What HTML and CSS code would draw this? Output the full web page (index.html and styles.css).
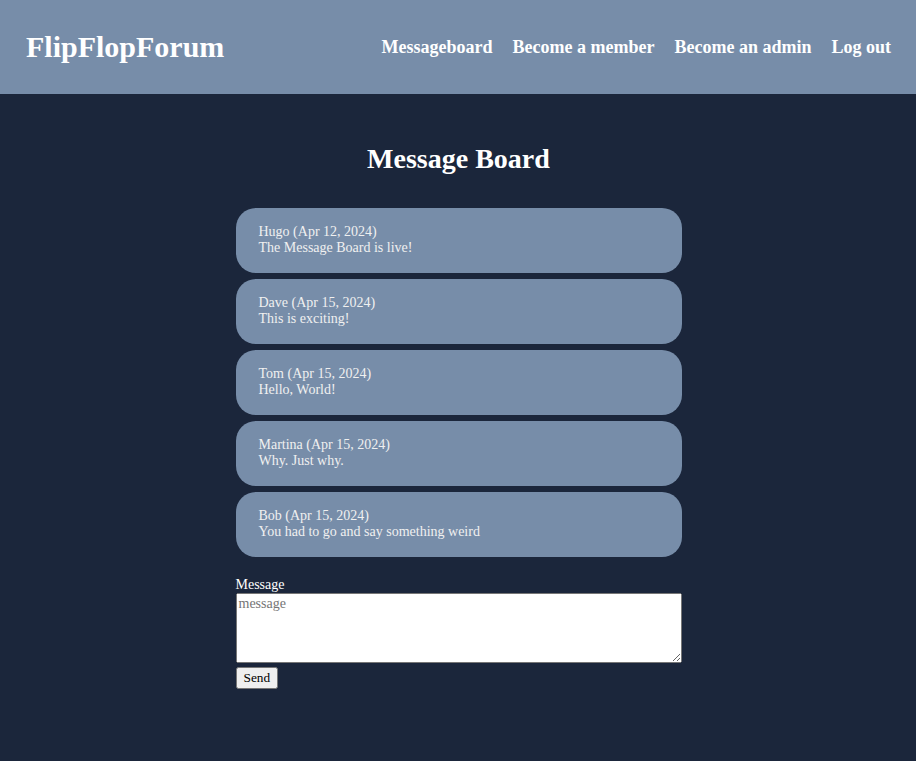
FILE: index.html
```html
<!DOCTYPE html>
<html>
<head>
<meta charset="utf-8">
<title>FlipFlopForum</title>
<link rel="stylesheet" href="styles.css">
</head>
<body>
<header class="site-header">
  <div class="logo">FlipFlopForum</div>
  <nav class="nav">
    <a href="#">Messageboard</a>
    <a href="#">Become a member</a>
    <a href="#">Become an admin</a>
    <a href="#">Log out</a>
  </nav>
</header>
<main class="board">
  <h1 class="board-title">Message Board</h1>
  <ul class="messages">
    <li class="message"><div>Hugo (Apr 12, 2024)</div><div>The Message Board is live!</div></li>
    <li class="message"><div>Dave (Apr 15, 2024)</div><div>This is exciting!</div></li>
    <li class="message"><div>Tom (Apr 15, 2024)</div><div>Hello, World!</div></li>
    <li class="message"><div>Martina (Apr 15, 2024)</div><div>Why. Just why.</div></li>
    <li class="message"><div>Bob (Apr 15, 2024)</div><div>You had to go and say something weird</div></li>
  </ul>
  <form class="post-form">
    <label for="msg">Message</label>
    <textarea id="msg" placeholder="message"></textarea>
    <button type="button">Send</button>
  </form>
</main>
</body>
</html>
```
FILE: styles.css
```css
html, body {
  margin: 0;
  padding: 0;
  background: #1b263b;
  color: #e0e1dd;
  font-family: "Liberation Serif", "Times New Roman", serif;
}
.site-header {
  background: #778da9;
  height: 94px;
  padding: 0 25px 0 26px;
  display: flex;
  align-items: center;
  justify-content: space-between;
}
.logo {
  font-size: 30px;
  font-weight: bold;
  color: #ffffff;
}
.nav {
  display: flex;
  gap: 20px;
}
.nav a {
  color: #ffffff;
  text-decoration: none;
  font-weight: bold;
  font-size: 18px;
}
.board {
  width: 446px;
  margin: 0 auto;
  padding-left: 1px;
}
.board-title {
  text-align: center;
  font-size: 28px;
  margin: 49px 0 33px;
  color: #ffffff;
}
.messages {
  list-style: none;
  margin: 0;
  padding: 0;
  display: flex;
  flex-direction: column;
  gap: 6px;
}
.message {
  background: #778da9;
  border-radius: 20px;
  padding: 16px 23px 17px;
  font-size: 14px;
  line-height: 16px;
  color: #f0f0f0;
}
.post-form {
  margin-top: 20px;
  display: flex;
  flex-direction: column;
  align-items: flex-start;
  font-size: 14px;
}
.post-form label {
  color: #ffffff;
}
.post-form textarea {
  box-sizing: border-box;
  width: 446px;
  height: 70px;
  font-family: "Liberation Serif", serif;
  font-size: 14px;
  margin: 0 0 4px;
}
.post-form button {
  font-family: "Liberation Serif", serif;
  font-size: 13.333px;
  margin: 0;
}
```
